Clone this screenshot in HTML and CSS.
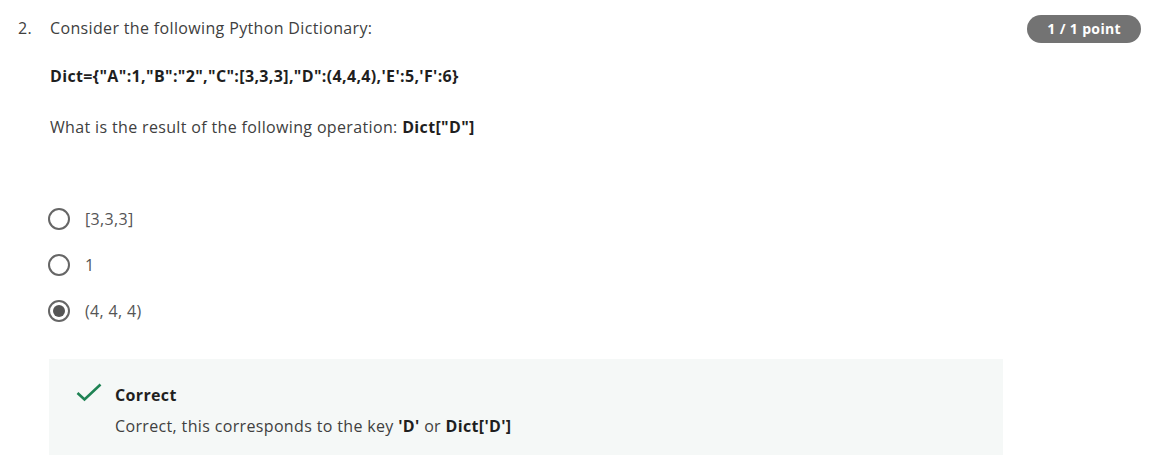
FILE: index.html
```html
<!DOCTYPE html>
<html>
<head>
<meta charset="utf-8">
<link rel="stylesheet" href="styles.css">
</head>
<body>
<div class="question">
  <div class="head">
    <span class="num">2.</span>
    <div class="body">
      <p class="line">Consider the following Python Dictionary:</p>
      <p class="line code"><b>Dict={"A":1,"B":"2","C":[3,3,3],"D":(4,4,4),'E':5,'F':6}</b></p>
      <p class="line">What is the result of the following operation: <b>Dict["D"]</b></p>
    </div>
    <span class="badge">1 / 1 point</span>
  </div>
  <div class="options">
    <div class="opt"><span class="radio"></span><span>[3,3,3]</span></div>
    <div class="opt"><span class="radio"></span><span>1</span></div>
    <div class="opt"><span class="radio checked"></span><span>(4, 4, 4)</span></div>
  </div>
  <div class="feedback">
    <svg class="check" width="26" height="19" viewBox="0 0 26 19"><path d="M1.5 10 L8.5 16.5 L24.5 1.5" fill="none" stroke="#1f8354" stroke-width="2.6"/></svg>
    <div class="fb-text">
      <div class="fb-title">Correct</div>
      <div class="fb-msg">Correct, this corresponds to the key <b>'D'</b> or <b>Dict['D']</b></div>
    </div>
  </div>
</div>
</body>
</html>
```
FILE: styles.css
```css
html, body { margin: 0; padding: 0; background: #fff; }
body { font-family: "Open Sans", "Liberation Sans", sans-serif; color: #373a3c; font-size: 16px; letter-spacing: 0.35px; }
.question { padding: 16px 16px 0 18px; width: 1124px; }
.head { display: flex; align-items: flex-start; }
.num { width: 32px; line-height: 24px; color: #404040; }
.body { flex: 1; }
.line { margin: 0 0 24px; line-height: 24px; color: #404040; }
.line.code { margin-bottom: 27px; margin-top: 1px; }
.line b { color: #1f1f1f; }
.badge { background: #737373; color: #fff; font-weight: 700; font-size: 14px; border-radius: 14px; height: 28px; line-height: 28px; padding: 0 20px; margin-top: -1px; margin-right: 1px; }
.options { margin-top: 44px; padding-left: 30px; display: flex; flex-direction: column; gap: 22px; }
.opt { display: flex; align-items: center; height: 24px; font-size: 16px; color: #555; }
.radio { width: 18px; height: 18px; border: 2.5px solid #666; border-radius: 50%; margin-right: 15px; position: relative; box-sizing: content-box; }
.radio.checked::after { content: ""; position: absolute; left: 3px; top: 3px; width: 12px; height: 12px; border-radius: 50%; background: #555; }
.feedback { margin: 36px 0 0 31px; width: 954px; height: 96px; background: #f5f8f7; display: flex; align-items: flex-start; padding: 0 0 0 27px; box-sizing: border-box; }
.check { margin-top: 24px; }
.fb-text { margin-left: 13px; padding-top: 25px; }
.fb-title { font-weight: 700; line-height: 22px; color: #1f1f1f; }
.fb-msg { margin-top: 9px; line-height: 22px; color: #404040; }
.fb-msg b { color: #1f1f1f; }
```
